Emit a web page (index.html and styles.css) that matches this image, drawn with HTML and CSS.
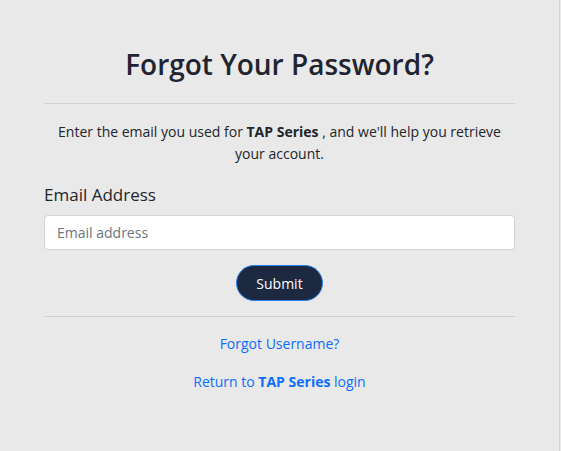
FILE: index.html
```html
<!DOCTYPE html>
<html lang="en">
<head>
<meta charset="utf-8">
<link rel="stylesheet" href="styles.css">
</head>
<body>
<div class="panel">
  <main class="content">
    <h2 class="title">Forgot Your Password?</h2>
    <hr class="rule">
    <p class="intro">Enter the email you used for <strong>TAP Series</strong> , and we'll help you retrieve your account.</p>
    <form class="form">
      <label class="label" for="email">Email Address</label>
      <input class="input" id="email" type="email" placeholder="Email address">
      <div class="actions">
        <button class="btn" type="button">Submit</button>
      </div>
    </form>
    <hr class="rule rule-bottom">
    <div class="links">
      <a class="link" href="#">Forgot Username?</a>
      <a class="link" href="#">Return to <strong>TAP Series</strong> login</a>
    </div>
  </main>
</div>
</body>
</html>
```

FILE: styles.css
```css
* { box-sizing: border-box; }
html, body { margin: 0; padding: 0; }
body {
  background: #e9e9e9;
  font-family: "Open Sans", "Noto Sans", sans-serif;
  color: #212529;
}
.panel {
  width: 560px;
  height: 451px;
  border-right: 1px solid #d3d3d3;
  background: #e9e9e9;
}
.content {
  padding: 44px 44px 0 44px;
  display: flex;
  flex-direction: column;
}
.title {
  margin: 0;
  text-align: center;
  font-size: 28px;
  font-weight: 600;
  line-height: 40px;
  color: #1f2430;
}
.rule {
  border: 0;
  border-top: 1px solid #d0d0d0;
  margin: 19px 0 0 0;
}
.intro {
  margin: 17px 0 0 0;
  text-align: center;
  font-size: 14px;
  line-height: 22px;
}
.form {
  display: flex;
  flex-direction: column;
}
.label {
  margin-top: 18px;
  font-size: 17px;
  line-height: 24px;
}
.input {
  margin-top: 8px;
  height: 35px;
  width: 100%;
  border: 1px solid #ced4da;
  border-radius: 4px;
  background: #fff;
  padding: 0 12px;
  font-family: inherit;
  font-size: 14px;
  color: #212529;
}
.input::placeholder { color: #6c757d; }
.actions {
  display: flex;
  justify-content: center;
  margin-top: 15px;
}
.btn {
  width: 87px;
  height: 36px;
  border-radius: 18px;
  background: #1c2940;
  border: 1px solid #2a7ff0;
  color: #fff;
  font-family: inherit;
  font-size: 14px;
}
.rule-bottom { margin-top: 15px; }
.links {
  display: flex;
  flex-direction: column;
  align-items: center;
  gap: 16px;
  margin-top: 16px;
}
.link {
  color: #0d6efd;
  text-decoration: none;
  font-size: 14px;
  line-height: 22px;
}
```
